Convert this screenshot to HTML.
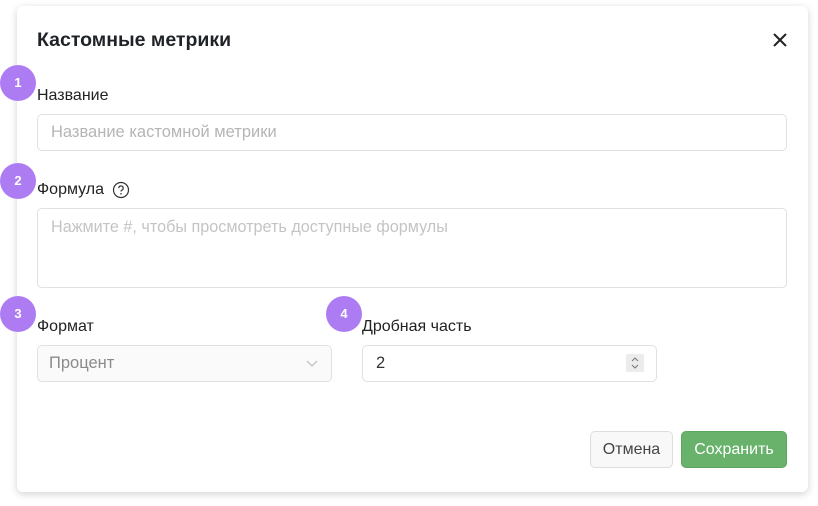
<!DOCTYPE html>
<html><head><meta charset="utf-8"><style>
*{box-sizing:border-box;margin:0;padding:0}
body{width:818px;height:506px;background:#fff;font-family:"Liberation Sans",sans-serif;position:relative;overflow:hidden;color:#222}
.modal{position:absolute;left:17px;top:6px;width:791px;height:486px;background:#fff;border-radius:6px;box-shadow:0 2px 8px rgba(0,0,0,.18)}
.a{position:absolute}
.title{left:37px;top:29px;font-size:19.5px;font-weight:bold;color:#1f2328}
.lbl{font-size:16px;color:#222}
.inp{border:1px solid #e1e1e1;border-radius:5px;background:#fff;font-size:16.5px;color:#b5b5b5;padding-left:13px}
.badge{width:36px;height:36px;border-radius:50%;background:#ad7cf3;color:#fff;font-size:13px;font-weight:bold;text-align:center;line-height:36px}
</style></head><body>
<div class="modal"></div>
<div class="a title">Кастомные метрики</div>
<svg class="a" style="left:771px;top:31px" width="18" height="18" viewBox="0 0 18 18"><path d="M3 3L15 15M15 3L3 15" stroke="#222" stroke-width="2"/></svg>

<div class="a badge" style="left:0;top:65px">1</div>
<div class="a lbl" style="left:37px;top:87px">Название</div>
<div class="a inp" style="left:37px;top:114px;width:750px;height:37px;line-height:35px">Название кастомной метрики</div>

<div class="a badge" style="left:0;top:163px">2</div>
<div class="a lbl" style="left:37px;top:181px">Формула</div>
<svg class="a" style="left:112px;top:181px" width="18" height="18" viewBox="0 0 18 18"><circle cx="9" cy="9" r="7.5" fill="none" stroke="#333" stroke-width="1.2"/><path d="M6.8 7.2a2.2 2.2 0 1 1 3 2c-.6.3-.8.7-.8 1.3" fill="none" stroke="#333" stroke-width="1.2"/><circle cx="9" cy="12.8" r=".8" fill="#333"/></svg>
<div class="a inp" style="left:37px;top:208px;width:750px;height:80px;padding-top:9px;font-size:16.2px;color:#c4c4c4">Нажмите #, чтобы просмотреть доступные формулы</div>

<div class="a badge" style="left:0;top:296px">3</div>
<div class="a lbl" style="left:37px;top:318px">Формат</div>
<div class="a inp" style="left:37px;top:345px;width:295px;height:37px;line-height:35px;background:#fafafa;color:#8a8a8a;padding-left:11px">Процент</div>
<svg class="a" style="left:305px;top:359px" width="14" height="9" viewBox="0 0 14 9"><path d="M2 2l5 5 5-5" fill="none" stroke="#c8c8c8" stroke-width="1.5"/></svg>

<div class="a badge" style="left:326px;top:296px">4</div>
<div class="a lbl" style="left:362px;top:318px">Дробная часть</div>
<div class="a inp" style="left:362px;top:345px;width:295px;height:37px;line-height:35px;color:#333;padding-left:13px">2</div>
<div class="a" style="left:626px;top:354px;width:18px;height:18px;background:#ececec;border-radius:2px"></div>
<svg class="a" style="left:628px;top:355px" width="14" height="16" viewBox="0 0 14 16"><path d="M4 6l3-3 3 3M4 10l3 3 3-3" fill="none" stroke="#777" stroke-width="1"/></svg>

<div class="a" style="left:590px;top:431px;width:83px;height:37px;border:1px solid #ddd;border-radius:5px;background:#f8f8f8;color:#444;font-size:16px;text-align:center;line-height:35px">Отмена</div>
<div class="a" style="left:681px;top:431px;width:106px;height:37px;border:1px solid #5ea65e;border-radius:5px;background:#69b26b;color:#fff;font-size:16px;text-align:center;line-height:35px">Сохранить</div>
</body></html>
